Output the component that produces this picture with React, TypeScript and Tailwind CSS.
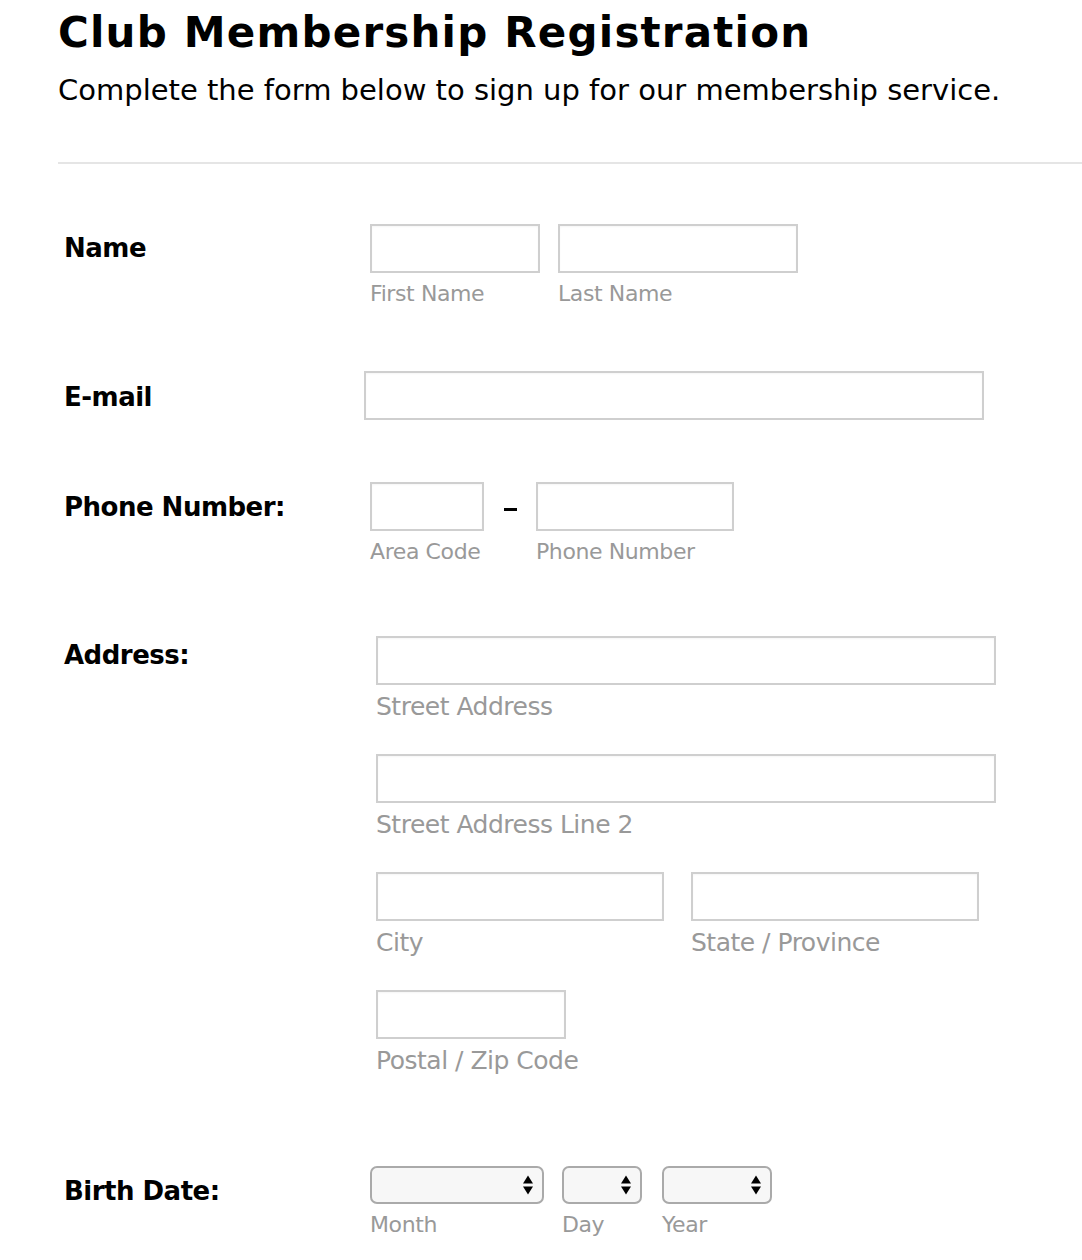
import React from "react";

const font = { fontFamily: '"DejaVu Sans", Verdana, sans-serif' };

function Field({ w, label, labelCls = "text-[22px] mt-[10px] tracking-[-0.4px]" }: { w: string; label?: string; labelCls?: string }) {
  return (
    <div className="flex flex-col">
      <input className={`${w} h-[49px] border-2 border-[#cfcfcf] bg-white outline-none shadow-[inset_0_1px_2px_rgba(0,0,0,0.04)]`} />
      {label && <div className={`${labelCls} leading-none text-[#999] whitespace-nowrap`}>{label}</div>}
    </div>
  );
}

function Sel({ w, label }: { w: string; label: string }) {
  return (
    <div className="flex flex-col">
      <div className={`${w} h-[38px] rounded-[7px] border-2 border-[#aaaaaa] bg-[#f7f7f7] flex items-center justify-end pr-[8px]`}>
        <svg width="12" height="22" viewBox="0 0 12 22">
          <path d="M6 1.5 L11 9.5 L1 9.5 Z" fill="#000" />
          <path d="M1 12.5 L11 12.5 L6 20.5 Z" fill="#000" />
        </svg>
      </div>
      <div className="text-[22px] leading-none text-[#999] mt-[10px] tracking-[-0.4px]">{label}</div>
    </div>
  );
}

function Label({ children, pt }: { children: React.ReactNode; pt: string }) {
  return <div className={`w-[312px] shrink-0 pl-[6px] ${pt} text-[26px] leading-none font-bold text-black tracking-[-0.5px]`}>{children}</div>;
}

const addrLabel = "text-[25px] mt-[9px] tracking-[-0.5px]";

export default function App() {
  return (
    <div className="bg-white min-h-[1260px] w-[1082px] pl-[58px] overflow-hidden" style={font}>
      <h1 className="pt-[12px] text-[42px] leading-none font-bold text-black tracking-[1.2px] whitespace-nowrap">Club Membership Registration</h1>
      <p className="mt-[22px] text-[29px] leading-none text-black whitespace-nowrap">Complete the form below to sign up for our membership service.</p>
      <div className="mt-[57px] h-[2px] bg-[#e5e5e5]" />

      <div className="mt-[60px] flex">
        <Label pt="pt-[11px]">Name</Label>
        <div className="flex gap-[18px]">
          <Field w="w-[170px]" label="First Name" />
          <Field w="w-[240px]" label="Last Name" />
        </div>
      </div>

      <div className="mt-[66px] flex">
        <Label pt="pt-[13px]">E-mail</Label>
        <div className="-ml-[6px]">
          <Field w="w-[620px]" />
        </div>
      </div>

      <div className="mt-[62px] flex">
        <Label pt="pt-[12px]">Phone Number:</Label>
        <div className="flex items-start">
          <Field w="w-[114px]" label="Area Code" />
          <div className="w-[52px] pt-[26px] flex justify-center">
            <div className="w-[13px] h-[2.5px] bg-black" />
          </div>
          <Field w="w-[198px]" label="Phone Number" />
        </div>
      </div>

      <div className="mt-[73px] flex">
        <Label pt="pt-[6px]">Address:</Label>
        <div className="ml-[6px] flex flex-col gap-[35px]">
          <Field w="w-[620px]" label="Street Address" labelCls={addrLabel} />
          <Field w="w-[620px]" label="Street Address Line 2" labelCls={addrLabel} />
          <div className="flex gap-[27px]">
            <Field w="w-[288px]" label="City" labelCls={addrLabel} />
            <Field w="w-[288px]" label="State / Province" labelCls={addrLabel} />
          </div>
          <Field w="w-[190px]" label="Postal / Zip Code" labelCls={addrLabel} />
        </div>
      </div>

      <div className="mt-[93px] flex">
        <Label pt="pt-[12px]">Birth Date:</Label>
        <div className="flex">
          <Sel w="w-[174px]" label="Month" />
          <div className="w-[18px]" />
          <Sel w="w-[80px]" label="Day" />
          <div className="w-[20px]" />
          <Sel w="w-[110px]" label="Year" />
        </div>
      </div>
    </div>
  );
}
